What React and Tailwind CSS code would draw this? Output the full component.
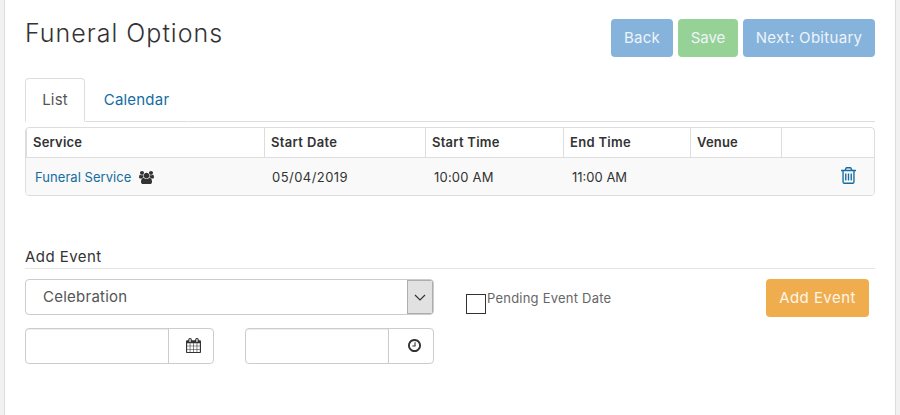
import React, { useState } from 'react';

const icons = {
  users: {
    viewBox: '-64 0 1920 1792',
    d: 'M529 896q-162 5-265 128h-134q-82 0-138-40.500t-56-118.500q0-353 124-353 6 0 43.500 21t97.500 42.500 119 21.500q67 0 133-23-5 37-5 66 0 139 81 256zm1071 637q0 120-73 189.500t-194 69.500h-874q-121 0-194-69.500t-73-189.500q0-53 3.500-103.500t14-109 26.500-108.500 43-97.500 62-81 85.500-53.500 111.500-20q10 0 43 21.500t73 48 107 48 135 21.500 135-21.500 107-48 73-48 43-21.500q61 0 111.500 20t85.500 53.500 62 81 43 97.500 26.500 108.500 14 109 3.500 103.500zm-1024-1277q0 106-75 181t-181 75-181-75-75-181 75-181 181-75 181 75 75 181zm704 384q0 159-112.500 271.500t-271.500 112.500-271.500-112.500-112.500-271.500 112.500-271.500 271.500-112.500 271.500 112.500 112.500 271.500zm576 225q0 78-56 118.500t-138 40.500h-134q-103-123-265-128 81-117 81-256 0-29-5-66 66 23 133 23 59 0 119-21.500t97.500-42.500 43.500-21q124 0 124 353zm-128-609q0 106-75 181t-181 75-181-75-75-181 75-181 181-75 181 75 75 181z',
  },
  trash: {
    viewBox: '192 128 1408 1536',
    d: 'M704 736v576q0 14-9 23t-23 9h-64q-14 0-23-9t-9-23v-576q0-14 9-23t23-9h64q14 0 23 9t9 23zm256 0v576q0 14-9 23t-23 9h-64q-14 0-23-9t-9-23v-576q0-14 9-23t23-9h64q14 0 23 9t9 23zm256 0v576q0 14-9 23t-23 9h-64q-14 0-23-9t-9-23v-576q0-14 9-23t23-9h64q14 0 23 9t9 23zm128 724v-948h-896v948q0 22 7 40.500t14.500 27 10.500 8.500h832q3 0 10.500-8.500t14.500-27 7-40.500zm-672-1076h448l-48-117q-7-9-17-11h-317q-10 2-17 11zm928 32v64q0 14-9 23t-23 9h-96v948q0 83-47 143.500t-113 60.500h-832q-66 0-113-58.500t-47-141.500v-952h-96q-14 0-23-9t-9-23v-64q0-14 9-23t23-9h309l70-167q15-37 54-63t79-26h320q40 0 79 26t54 63l70 167h309q14 0 23 9t9 23z',
  },
  calendar: {
    viewBox: '64 0 1664 1792',
    d: 'M192 1664h288v-288h-288v288zm352 0h320v-288h-320v288zm-352-352h288v-320h-288v320zm352 0h320v-320h-320v320zm-352-384h288v-288h-288v288zm736 736h320v-288h-320v288zm-384-736h320v-288h-320v288zm768 736h288v-288h-288v288zm-384-352h320v-320h-320v320zm-352-864v-288q0-13-9.500-22.500t-22.500-9.500h-64q-13 0-22.500 9.500t-9.500 22.500v288q0 13 9.500 22.500t22.500 9.500h64q13 0 22.500-9.500t9.500-22.500zm736 864h288v-320h-288v320zm-384-384h320v-288h-320v288zm384 0h288v-288h-288v288zm32-480v-288q0-13-9.500-22.500t-22.500-9.500h-64q-13 0-22.500 9.500t-9.500 22.500v288q0 13 9.500 22.500t22.500 9.500h64q13 0 22.500-9.500t9.500-22.500zm384-64v1280q0 52-38 90t-90 38h-1408q-52 0-90-38t-38-90v-1280q0-52 38-90t90-38h128v-96q0-66 47-113t113-47h64q66 0 113 47t47 113v96h384v-96q0-66 47-113t113-47h64q66 0 113 47t47 113v96h128q52 0 90 38t38 90z',
  },
  clock: {
    viewBox: '128 128 1536 1536',
    d: 'M1024 544v448q0 14-9 23t-23 9h-320q-14 0-23-9t-9-23v-64q0-14 9-23t23-9h224v-352q0-14 9-23t23-9h64q14 0 23 9t9 23zm416 352q0-148-73-273t-198-198-273-73-273 73-198 198-73 273 73 273 198 198 273 73 273-73 198-198 73-273zm224 0q0 209-103 385.500t-279.500 279.500-385.500 103-385.500-103-279.500-279.500-103-385.500 103-385.500 279.500-279.500 385.500-103 385.500 103 279.500 279.500 103 385.500z',
  },
};

function Icon({ name, className }) {
  return (
    <svg viewBox={icons[name].viewBox} preserveAspectRatio="none" fill="currentColor" className={className}>
      <path d={icons[name].d} />
    </svg>
  );
}

function Header() {
  return (
    <header className="flex justify-between items-start h-[59px]">
      <h1 className="text-[25px] leading-[29px] tracking-[1px] font-[350] text-[#333]">Funeral Options</h1>
      <div className="flex gap-[5px] text-[15px] text-[#eef4fa]">
        <button className="w-[62px] h-[38px] rounded bg-[#85b3dc] tracking-[0.3px]">Back</button>
        <button className="w-[60px] h-[38px] rounded bg-[#96d296]">Save</button>
        <button className="w-[132px] h-[38px] rounded bg-[#85b3dc] tracking-[0.3px]">Next: Obituary</button>
      </div>
    </header>
  );
}

function Tabs({ active, onChange }) {
  const on = 'border-[#ddd] border-b-white text-[#555]';
  const off = 'border-transparent border-b-[#ddd] text-[#146c9f]';
  return (
    <nav className="flex h-11 text-[15px] tracking-[0.2px]">
      <button onClick={() => onChange('List')} className={`w-[60px] border rounded-t ${active === 'List' ? on : off}`}>List</button>
      <button onClick={() => onChange('Calendar')} className={`w-[103px] border ${active === 'Calendar' ? on : off}`}>Calendar</button>
      <div className="flex-1 border-b border-[#ddd]"></div>
    </nav>
  );
}

function EventTable() {
  const cols = 'grid grid-cols-[239px_161px_138px_127px_91px_1fr]';
  return (
    <div className="mt-[5px] border border-[#ddd] rounded overflow-hidden text-[13px] text-[#333]">
      <div className={`${cols} h-[29px] font-semibold tracking-[0.2px]`}>
        <div className="pl-1.5 leading-[29px] border-x border-[#ddd]">Service</div>
        <div className="pl-1.5 leading-[29px] border-r border-[#ddd] tracking-[0.35px]">Start Date</div>
        <div className="pl-1.5 leading-[29px] border-r border-[#ddd] tracking-[0.25px]">Start Time</div>
        <div className="pl-1.5 leading-[29px] border-r border-[#ddd] tracking-[0.3px]">End Time</div>
        <div className="pl-1.5 leading-[29px] border-r border-[#ddd]">Venue</div>
        <div></div>
      </div>
      <div className={`${cols} h-[38px] items-center bg-[#f9f9f9] border-t border-[#ddd]`}>
        <div className="flex items-center pl-[9px] pt-0.5">
          <a href="#" className="w-24 whitespace-nowrap text-[#146c9f] tracking-[0.05px]">Funeral Service</a>
          <Icon name="users" className="ml-2 w-[15px] h-[13px]" />
        </div>
        <div className="pl-[7px] pt-0.5 tracking-[0.45px]">05/04/2019</div>
        <div className="pl-2 pt-0.5 tracking-[0.2px]">10:00 AM</div>
        <div className="pl-2 pt-0.5">11:00 AM</div>
        <div></div>
        <button className="justify-self-end mr-[18px] mb-[3px] text-[#146c9f]">
          <Icon name="trash" className="block w-[15px] h-[17px]" />
        </button>
      </div>
    </div>
  );
}

function IconInput({ icon, iconClass }) {
  return (
    <div className="flex w-[189px] h-9 border border-[#ccc] rounded overflow-hidden text-[#333]">
      <input type="text" className="w-[142px] px-3 outline-none shadow-[inset_0_1px_1px_rgba(0,0,0,0.075)]" />
      <button className="flex-1 flex items-center justify-center border-l border-[#ccc]">
        <Icon name={icon} className={iconClass} />
      </button>
    </div>
  );
}

function AddEvent() {
  const [pending, setPending] = useState(false);

  return (
    <section className="mt-[51px]">
      <h2 className="h-[22px] border-b border-[#e5e5e5] text-[15px] leading-5 tracking-[0.45px] text-[#333]">Add Event</h2>
      <div className="flex mt-2.5">
        <div className="w-[409px]">
          <button className="flex w-full h-9 border border-[#ccc] rounded overflow-hidden text-[15px] text-[#555]">
            <span className="flex-1 self-center pl-[17px] text-left tracking-[0.25px]">Celebration</span>
            <span className="w-[26px] h-full flex items-center justify-center border border-[#adadad] bg-[#e1e1e1]">
              <svg viewBox="0 0 12 7" className="w-3 h-[7px]" fill="none" stroke="#333" strokeWidth="1.2">
                <path d="M1 1l5 5 5-5" />
              </svg>
            </span>
          </button>
          <div className="flex justify-between mt-[13px]">
            <IconInput icon="calendar" iconClass="w-[15px] h-[15px] ml-1 mb-0.5" />
            <IconInput icon="clock" iconClass="w-[13px] h-[13px] ml-1.5 mb-0.5" />
          </div>
        </div>
        <label className="flex items-start ml-8 text-[13px] text-[#666]">
          <input
            type="checkbox"
            checked={pending}
            onChange={() => setPending(!pending)}
            className="appearance-none w-5 h-5 mt-[15px] mr-px border border-[#333] checked:bg-[#333]"
          />
          <span className="mt-[9px] leading-5 tracking-[0.22px]">Pending Event Date</span>
        </label>
        <button className="ml-auto mr-1.5 w-[103px] h-[38px] rounded bg-[#f0ad4e] text-[15px] tracking-[0.45px] text-[#fdf5e9]">Add Event</button>
      </div>
    </section>
  );
}

export default function App() {
  const [tab, setTab] = useState('List');

  return (
    <div className="h-[415px] px-1 bg-[#f1f1f1] overflow-hidden font-['Inter',sans-serif]">
      <main className="h-full px-5 pt-[19px] bg-white border-x border-[#ddd]">
        <Header />
        <Tabs active={tab} onChange={setTab} />
        <EventTable />
        <AddEvent />
      </main>
    </div>
  );
}
